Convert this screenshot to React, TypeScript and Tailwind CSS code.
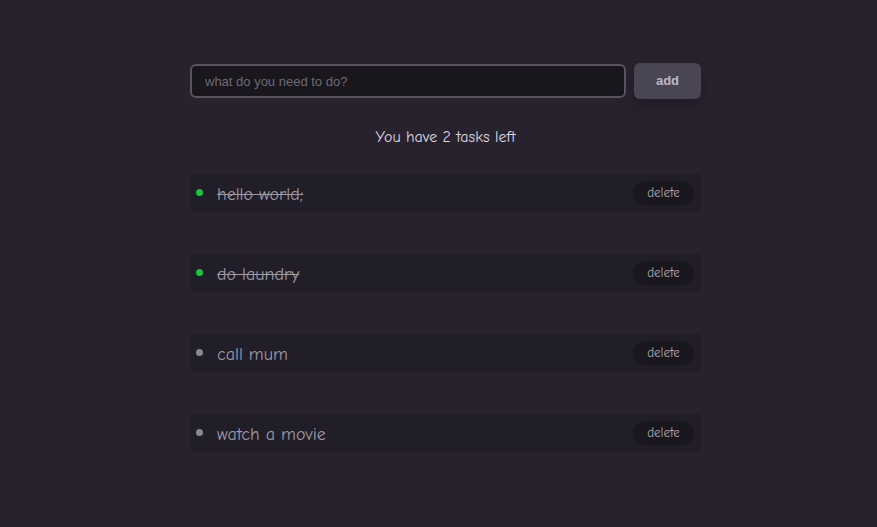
import React, { useState } from 'react';

type Task = { id: number; text: string; done: boolean };

const initialTasks: Task[] = [
  { id: 1, text: 'hello world;', done: true },
  { id: 2, text: 'do laundry', done: true },
  { id: 3, text: 'call mum', done: false },
  { id: 4, text: 'watch a movie', done: false },
];

const comic = { fontFamily: '"Comic Sans MS", "Comic Neue", cursive' };

// single task row
function TaskRow({ task, onToggle, onDelete }: { task: Task; onToggle: () => void; onDelete: () => void }) {
  return (
    <div className="flex items-center h-[38px] bg-[#211d29] rounded-[4px] pl-[6px] pr-[7px]">
      <button
        onClick={onToggle}
        className={`w-[7px] h-[7px] rounded-full mt-[-2px] ${task.done ? 'bg-[#1ec33a]' : 'bg-[#8b8791]'}`}
      />
      <span
        className={`ml-[14px] text-[18px] leading-none mt-[3px] text-[#9e9aa4] ${task.done ? 'line-through' : ''}`}
        style={comic}
      >
        {task.text}
      </span>
      <button
        onClick={onDelete}
        className="ml-auto h-[24px] w-[61px] rounded-full bg-[#19161e] text-[13px] text-[#aaa6b0]"
        style={comic}
      >
        delete
      </button>
    </div>
  );
}

export default function App() {
  const [tasks, setTasks] = useState<Task[]>(initialTasks);
  const [value, setValue] = useState('');
  const left = tasks.filter((t) => !t.done).length;

  return (
    <div className="min-h-[527px] bg-[#28222f] flex justify-center pl-[14px] pt-[63px]">
      <div className="w-[511px]">
        {/* input + add */}
        <div className="flex items-center gap-[8px]">
          <input
            value={value}
            onChange={(e) => setValue(e.target.value)}
            placeholder="what do you need to do?"
            className="w-[436px] h-[34px] rounded-[6px] border-2 border-[#58535e] bg-[#19161d] px-[13px] text-[13px] text-[#ccc] placeholder:text-[#6f6a74] outline-none"
            style={{ fontFamily: '"Liberation Sans", Arial, sans-serif' }}
          />
          <button
            onClick={() => {
              if (!value.trim()) return;
              setTasks([...tasks, { id: Date.now(), text: value, done: false }]);
              setValue('');
            }}
            className="w-[67px] h-[36px] rounded-[6px] bg-[#4a4552] text-[13px] font-bold text-[#bdb9c2] shadow-[0_6px_14px_rgba(0,0,0,0.25)]"
            style={{ fontFamily: '"Liberation Sans", Arial, sans-serif' }}
          >
            add
          </button>
        </div>

        <p className="mt-[27px] text-center text-[16px] leading-[22px] text-[#dcd8e0]" style={comic}>
          You have {left} tasks left
        </p>

        <div className="mt-[26px] flex flex-col gap-[42px]">
          {tasks.map((t) => (
            <TaskRow
              key={t.id}
              task={t}
              onToggle={() => setTasks(tasks.map((x) => (x.id === t.id ? { ...x, done: !x.done } : x)))}
              onDelete={() => setTasks(tasks.filter((x) => x.id !== t.id))}
            />
          ))}
        </div>
      </div>
    </div>
  );
}
